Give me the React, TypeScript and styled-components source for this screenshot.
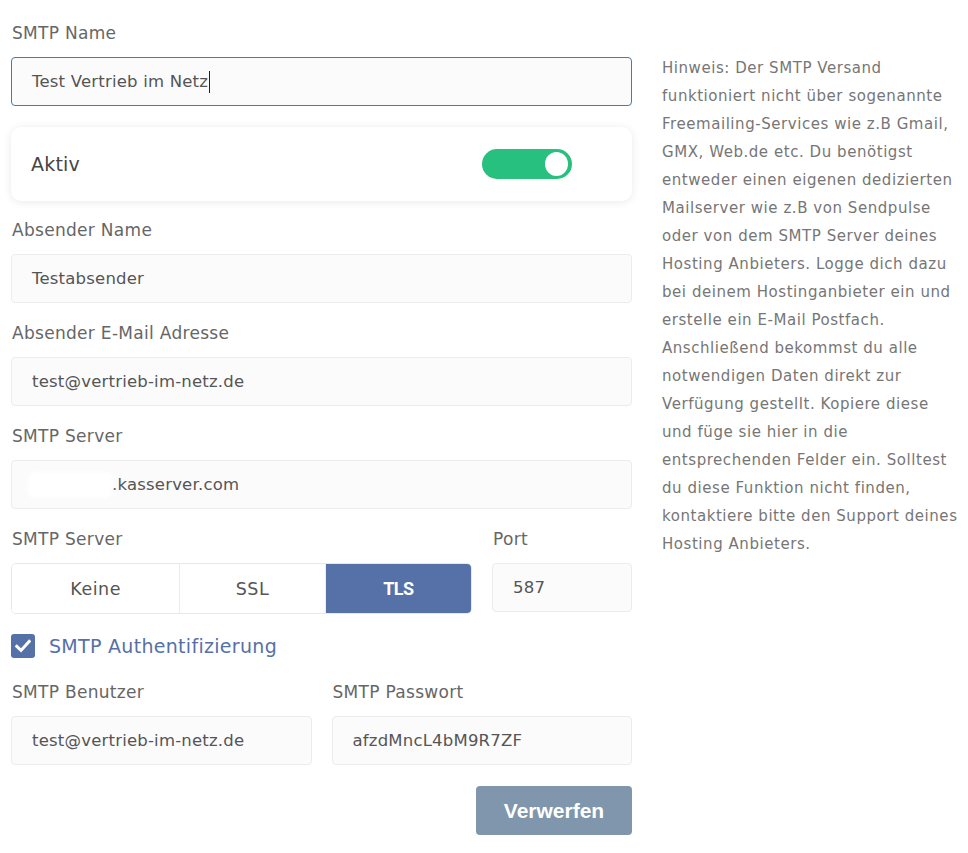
import React from "react";
import styled, { createGlobalStyle } from "styled-components";

const Global = createGlobalStyle`
  html, body { margin: 0; padding: 0; background: #ffffff; }
  body { font-family: "DejaVu Sans", "Open Sans", Arial, sans-serif; }
  * { box-sizing: border-box; }
`;

const Page = styled.div`
  display: flex;
  align-items: flex-start;
  gap: 30px;
  padding: 21px 0 0 11px;
`;

const FormColumn = styled.div`
  width: 621px;
  display: flex;
  flex-direction: column;
`;

const Field = styled.div<{ $mb?: number; $basis?: number }>`
  display: flex;
  flex-direction: column;
  gap: 12px;
  margin-bottom: ${(p) => p.$mb ?? 18}px;
  flex: ${(p) => (p.$basis ? `0 0 ${p.$basis}px` : "1")};
`;

const Label = styled.div`
  font-size: 17px;
  line-height: 24px;
  color: #666666;
  padding-left: 1px;
  letter-spacing: 0.3px;
`;

const TextBox = styled.div<{ $focused?: boolean }>`
  height: 49px;
  display: flex;
  align-items: center;
  padding: 0 20px;
  background: #fbfbfc;
  border: 1px solid ${(p) => (p.$focused ? "#4f78a8" : "#ececec")};
  border-radius: 4px;
  font-size: 16.5px;
  color: #555555;
  white-space: nowrap;
  letter-spacing: 0.2px;
`;

const Caret = styled.span`
  display: inline-block;
  width: 1px;
  height: 22px;
  background: #222;
  margin-left: 1px;
`;

const Redaction = styled.span`
  display: inline-block;
  width: 84px;
  height: 26px;
  margin-left: -4px;
  background: #ffffff;
  filter: blur(2px);
  border-radius: 6px;
`;

const Card = styled.div`
  height: 74px;
  margin: 1px 0 17px;
  display: flex;
  align-items: center;
  justify-content: space-between;
  padding: 0 60px 0 20px;
  background: #ffffff;
  border-radius: 10px;
  box-shadow: 0 1px 8px rgba(0, 0, 0, 0.09);
`;

const CardTitle = styled.div`
  font-size: 19px;
  color: #454545;
  letter-spacing: 0.2px;
`;

const Switch = styled.div<{ $on: boolean }>`
  width: 90px;
  height: 30px;
  border-radius: 15px;
  background: ${(p) => (p.$on ? "#27c07f" : "#cccccc")};
  display: flex;
  align-items: center;
  justify-content: ${(p) => (p.$on ? "flex-end" : "flex-start")};
  padding: 0 4px;
`;

const Knob = styled.div`
  width: 23px;
  height: 24px;
  border-radius: 50%;
  background: #ffffff;
`;

const Row = styled.div<{ $gap: number }>`
  display: flex;
  gap: ${(p) => p.$gap}px;
`;

const Segmented = styled.div`
  width: 461px;
  height: 51px;
  display: flex;
  border: 1px solid #e8e8e8;
  border-radius: 5px;
  overflow: hidden;
  background: #ffffff;
`;

const Segment = styled.div<{ $active?: boolean; $w: number }>`
  width: ${(p) => p.$w}px;
  display: flex;
  align-items: center;
  justify-content: center;
  font-size: ${(p) => (p.$active ? "18px" : "17.5px")};
  letter-spacing: ${(p) => (p.$active ? "-0.6px" : "0.5px")};
  font-family: ${(p) =>
    p.$active ? 'Roboto, "Liberation Sans", Arial, sans-serif' : "inherit"};
  font-weight: ${(p) => (p.$active ? 700 : 400)};
  color: ${(p) => (p.$active ? "#ffffff" : "#555555")};
  background: ${(p) => (p.$active ? "#5670a8" : "#ffffff")};
  & + & {
    border-left: 1px solid #ececec;
  }
`;

const CheckRow = styled.div`
  display: flex;
  align-items: center;
  gap: 14px;
  margin: 20px 0 22px;
`;

const CheckBox = styled.div`
  width: 24px;
  height: 24px;
  border-radius: 3px;
  background: #5670a8;
  display: flex;
  align-items: center;
  justify-content: center;
`;

const CheckLabel = styled.div`
  font-size: 19px;
  color: #5670a8;
  letter-spacing: 0.3px;
`;

const Actions = styled.div`
  display: flex;
  justify-content: flex-end;
  margin-top: 3px;
`;

const Button = styled.button`
  width: 156px;
  height: 49px;
  border: none;
  border-radius: 4px;
  background: #7f96ac;
  color: #ffffff;
  font-family: "Liberation Sans", Arial, sans-serif;
  font-weight: 700;
  font-size: 21px;
`;

const Hint = styled.p`
  width: 300px;
  margin: 33px 0 0;
  font-size: 15px;
  line-height: 28px;
  color: #767676;
  letter-spacing: 0.55px;
`;

export default function App() {
  return (
    <>
      <Global />
      <Page>
        <FormColumn>
          <Field $mb={20}>
            <Label>SMTP Name</Label>
            <TextBox $focused>
              Test Vertrieb im Netz
              <Caret />
            </TextBox>
          </Field>

          <Card>
            <CardTitle>Aktiv</CardTitle>
            <Switch $on>
              <Knob />
            </Switch>
          </Card>

          <Field>
            <Label>Absender Name</Label>
            <TextBox>Testabsender</TextBox>
          </Field>

          <Field>
            <Label>Absender E-Mail Adresse</Label>
            <TextBox>test@vertrieb-im-netz.de</TextBox>
          </Field>

          <Field>
            <Label>SMTP Server</Label>
            <TextBox>
              <Redaction />
              .kasserver.com
            </TextBox>
          </Field>

          <Row $gap={20}>
            <Field $mb={0} $basis={461}>
              <Label>SMTP Server</Label>
              <Segmented>
                <Segment $w={168}>Keine</Segment>
                <Segment $w={146}>SSL</Segment>
                <Segment $w={147} $active>
                  TLS
                </Segment>
              </Segmented>
            </Field>
            <Field $mb={0}>
              <Label>Port</Label>
              <TextBox>587</TextBox>
            </Field>
          </Row>

          <CheckRow>
            <CheckBox>
              <svg width="16" height="14" viewBox="0 0 16 14">
                <path
                  d="M1.8 7.4 L6 11.4 L14.2 2.4"
                  fill="none"
                  stroke="#ffffff"
                  strokeWidth="3"
                  strokeLinecap="square"
                />
              </svg>
            </CheckBox>
            <CheckLabel>SMTP Authentifizierung</CheckLabel>
          </CheckRow>

          <Row $gap={20}>
            <Field>
              <Label>SMTP Benutzer</Label>
              <TextBox>test@vertrieb-im-netz.de</TextBox>
            </Field>
            <Field>
              <Label>SMTP Passwort</Label>
              <TextBox>afzdMncL4bM9R7ZF</TextBox>
            </Field>
          </Row>

          <Actions>
            <Button>Verwerfen</Button>
          </Actions>
        </FormColumn>

        <Hint>
          Hinweis: Der SMTP Versand funktioniert nicht über sogenannte
          Freemailing-Services wie z.B Gmail, GMX, Web.de etc. Du benötigst
          entweder einen eigenen dedizierten Mailserver wie z.B von Sendpulse
          oder von dem SMTP Server deines Hosting Anbieters. Logge dich dazu bei
          deinem Hostinganbieter ein und erstelle ein E-Mail Postfach.
          Anschließend bekommst du alle notwendigen Daten direkt zur Verfügung
          gestellt. Kopiere diese und füge sie hier in die entsprechenden Felder
          ein. Solltest du diese Funktion nicht finden, kontaktiere bitte den
          Support deines Hosting Anbieters.
        </Hint>
      </Page>
    </>
  );
}
